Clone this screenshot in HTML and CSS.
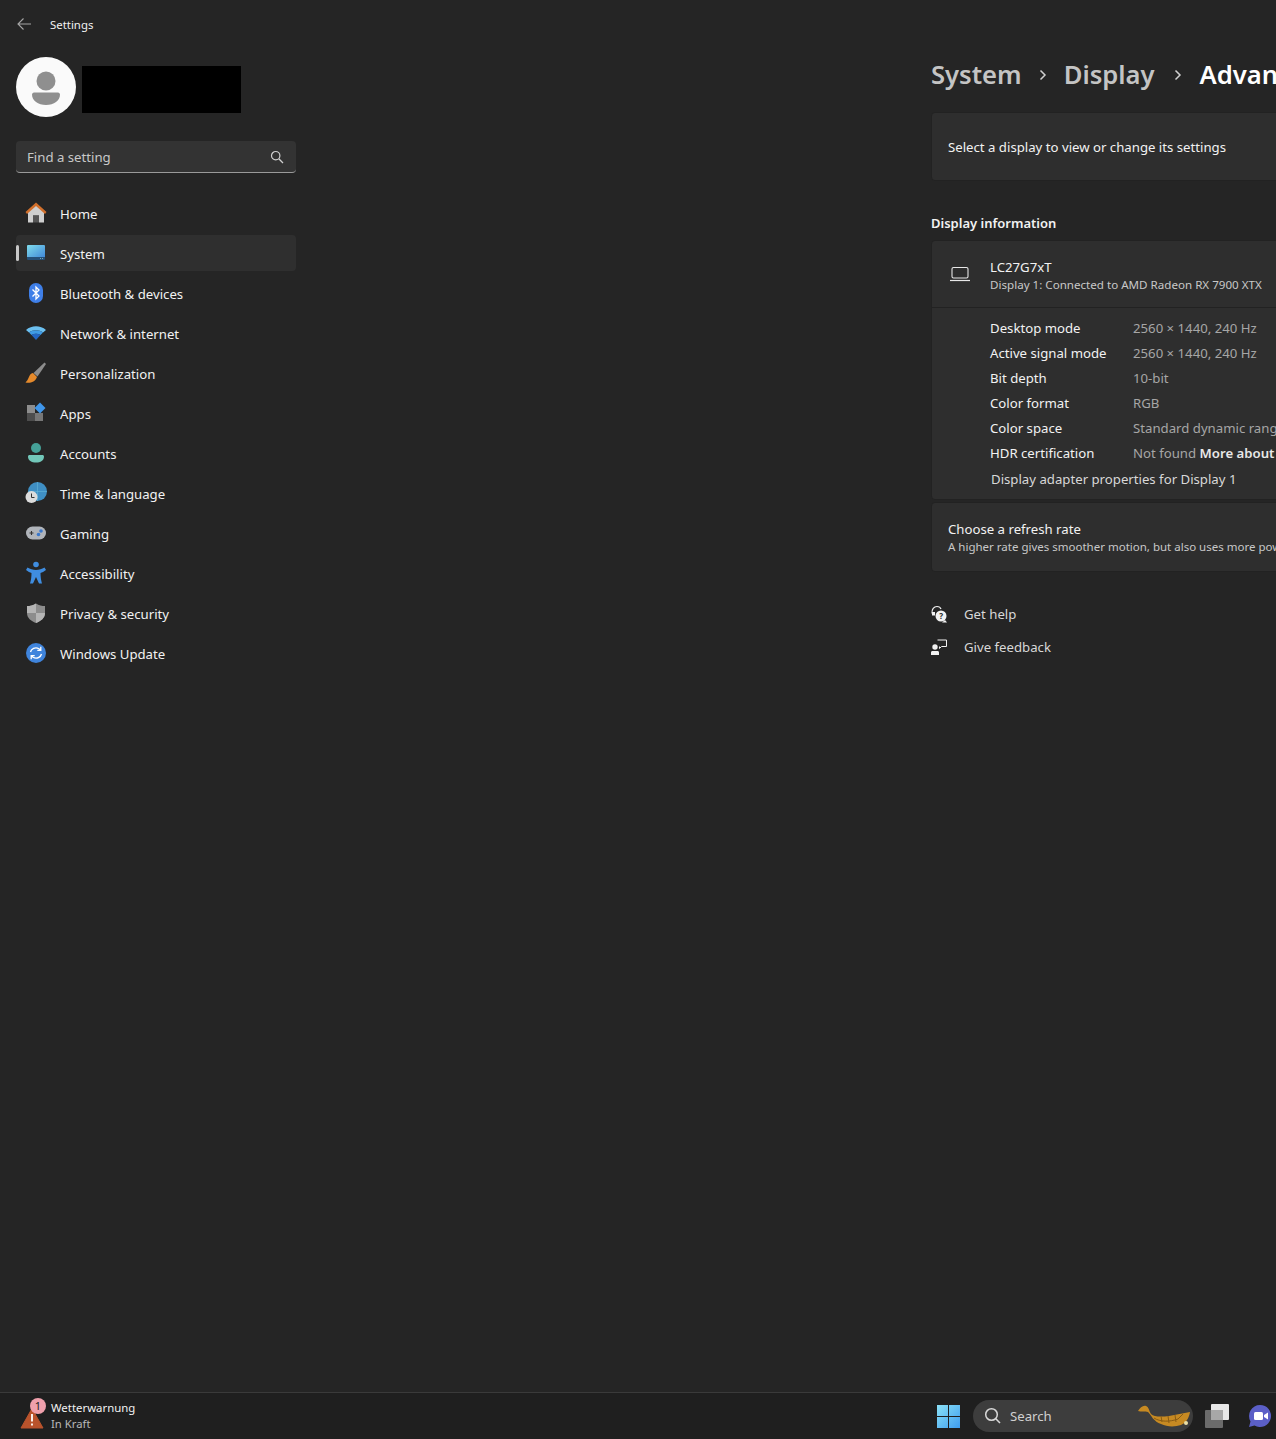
FILE: index.html
```html
<!DOCTYPE html>
<html lang="en">
<head>
    <meta charset="UTF-8">
    <meta name="viewport" content="width=device-width, initial-scale=1.0">
    <title>Settings</title>
    <link rel="stylesheet" href="styles.css">
</head>
<body>
    <div class="window">
        <header class="titlebar">
            <svg class="back-icon" width="16" height="16" viewBox="0 0 16 16"><path d="M15 8H2M7.500 2.500 2 8l5.500 5.500" fill="none" stroke="#a6a6a6" stroke-width="1.100"/></svg>
            <span class="app-title">Settings</span>
        </header>

        <div class="columns">
            <aside class="sidebar">
                <div class="profile">
                    <div class="avatar">
                        <svg width="60" height="60" viewBox="0 0 60 60"><circle cx="30" cy="24" r="9.500" fill="#8f8f8f"/><path d="M16 37.500c0-1 1-2 2-2h24c1 0 2 1 2 2 0 6-6 10.500-14 10.500s-14-4.500-14-10.500z" fill="#8f8f8f"/></svg>
                    </div>
                    <div class="redacted"></div>
                </div>

                <div class="search-box">
                    <span>Find a setting</span>
                    <svg width="14" height="14" viewBox="0 0 14 14"><circle cx="5.700" cy="5.700" r="4.200" fill="none" stroke="#d0d0d0" stroke-width="1.200"/><path d="M8.800 8.800 13 13" stroke="#d0d0d0" stroke-width="1.300"/></svg>
                </div>

                <nav class="nav">
                    <a class="nav-item">
                        <svg class="nav-icon" viewBox="0 0 24 24"><path d="M4 10 12 3.500l8 6.500v11.500H15v-7H9v7H4z" fill="#cfcfcf"/><path d="M9 14.500h6v7H9z" fill="#555"/><path d="M1.500 11 12 1.500 22.500 11 21 13 12 5 3 13z" fill="#d2702c"/></svg>
                        Home
                    </a>
                    <a class="nav-item active">
                        <svg class="nav-icon" viewBox="0 0 24 24"><defs><linearGradient id="sys" x1="0" y1="0" x2="1" y2="1"><stop offset="0" stop-color="#7fdcec"/><stop offset="1" stop-color="#3f86d8"/></linearGradient></defs><rect x="3" y="4" width="18" height="13" rx="1" fill="url(#sys)"/><path d="M3 16h18v2a1 1 0 0 1-1 1H4a1 1 0 0 1-1-1z" fill="#254f78"/><path d="M16 17.500h1M18 17.500h1" stroke="#9cc" stroke-width=".7"/></svg>
                        System
                    </a>
                    <a class="nav-item">
                        <svg class="nav-icon" viewBox="0 0 24 24"><rect x="5" y="2" width="14" height="20" rx="7" fill="#3f7fe8"/><path d="M8.500 8.500 15 15l-3 3V6l3 3-6.500 6.500" fill="none" stroke="#fff" stroke-width="1.300"/></svg>
                        Bluetooth &amp; devices
                    </a>
                    <a class="nav-item">
                        <svg class="nav-icon" viewBox="0 0 24 24"><path d="M2 9C7.500 4 16.500 4 22 9l-3 2.500c-4-3-10-3-14 0z" fill="#6cc0f0"/><path d="M5 11.500c4-3 10-3 14 0L16.500 14c-2.700-1.800-6.300-1.800-9 0z" fill="#3f9be6"/><path d="M7.500 14c2.700-1.800 6.300-1.800 9 0L12 19z" fill="#2467c4"/></svg>
                        Network &amp; internet
                    </a>
                    <a class="nav-item">
                        <svg class="nav-icon" viewBox="0 0 24 24"><path d="M20.500 1.500 22 3 13.500 15.500 9.500 12z" fill="#8c8c8c"/><path d="M9 12c-3 .5-3.500 3-4.500 5-.5 1.500-1.500 3-3 4.500 4.500.8 9.500 0 11.500-5.500z" fill="#e58a2c"/></svg>
                        Personalization
                    </a>
                    <a class="nav-item">
                        <svg class="nav-icon" viewBox="0 0 24 24"><rect x="3" y="4" width="8" height="8" fill="#8d8d8d"/><rect x="3" y="12" width="8" height="8" fill="#4d4d4d"/><rect x="11" y="12" width="8" height="8" fill="#777"/><path d="M16 1.500 21.500 7 16 12.500 10.500 7z" fill="#3f96ea"/></svg>
                        Apps
                    </a>
                    <a class="nav-item">
                        <svg class="nav-icon" viewBox="0 0 24 24"><circle cx="12" cy="7" r="5" fill="#45a198"/><path d="M4 15.500c0-1 .8-1.500 1.500-1.500h13c.7 0 1.500.5 1.500 1.500 0 4-3.500 6-8 6s-8-2-8-6z" fill="#72c7b9"/></svg>
                        Accounts
                    </a>
                    <a class="nav-item">
                        <svg class="nav-icon" viewBox="0 0 24 24"><circle cx="13.500" cy="10.500" r="9.500" fill="#3f8fc4"/><path d="M13.500 1v19M4 10.500h19" stroke="#5fb0d6" stroke-width=".7"/><circle cx="7.500" cy="16" r="6" fill="#dcdcdc"/><path d="M7.500 12.500V16.500H10.500" fill="none" stroke="#333" stroke-width="1"/></svg>
                        Time &amp; language
                    </a>
                    <a class="nav-item">
                        <svg class="nav-icon" viewBox="0 0 24 24"><rect x="2" y="5.500" width="20" height="13" rx="6.500" fill="#b0b4ba"/><path d="M5.500 12h4M7.500 10v4" stroke="#333" stroke-width="1.100"/><circle cx="17" cy="10" r="1.800" fill="#3a78cc"/><circle cx="14.500" cy="13.500" r="1.800" fill="#3a78cc"/></svg>
                        Gaming
                    </a>
                    <a class="nav-item">
                        <svg class="nav-icon" viewBox="0 0 24 24"><circle cx="12" cy="3.500" r="2.800" fill="#3f8de0"/><path d="M3.500 6.500c2.500 1.500 5.500 2.500 8.500 2.500s6-1 8.500-2.500L22 9c-2 1.500-4 2.500-5.500 3 0 4 .5 7 1.500 10.500h-3L12 16l-3 6.500H6c1-3.500 1.500-6.500 1.500-10.500C6 11.500 4 10.500 2 9z" fill="#3f8de0"/></svg>
                        Accessibility
                    </a>
                    <a class="nav-item">
                        <svg class="nav-icon" viewBox="0 0 24 24"><path d="M12 2.500c3 2 6 2.500 9 2.500v7c0 5-4 8-9 10-5-2-9-5-9-10V5c3 0 6-.5 9-2.500z" fill="#8d8d8d"/><path d="M12 2.500V12H3V5c3 0 6-.5 9-2.500zM12 12h9c0 5-4 8-9 10z" fill="#b5b5b5"/></svg>
                        Privacy &amp; security
                    </a>
                    <a class="nav-item">
                        <svg class="nav-icon" viewBox="0 0 24 24"><circle cx="12" cy="12" r="10" fill="#3f84dc"/><path d="M6.500 11c.6-3 4.800-5.500 8.500-3.200l1.500 1.400M16.800 5.800v3.600h-3.500M17.500 13c-.6 3-4.800 5.500-8.500 3.200l-1.500-1.400M7.200 18.200v-3.600h3.500" fill="none" stroke="#fff" stroke-width="1.300"/></svg>
                        Windows Update
                    </a>
                </nav>
            </aside>

            <main class="content">
                <div class="breadcrumb">
                    <span class="crumb">System</span>
                    <svg class="crumb-sep" width="12" height="12" viewBox="0 0 12 12"><path d="M3.500 1.500 8 6l-4.500 4.500" fill="none" stroke="#d0d0d0" stroke-width="1.500"/></svg>
                    <span class="crumb">Display</span>
                    <svg class="crumb-sep last-sep" width="12" height="12" viewBox="0 0 12 12"><path d="M3.500 1.500 8 6l-4.500 4.500" fill="none" stroke="#d0d0d0" stroke-width="1.500"/></svg>
                    <span class="crumb current">Advanced display</span>
                </div>

                <div class="card select-card">Select a display to view or change its settings</div>

                <h2 class="section-title">Display information</h2>

                <div class="card info-card">
                    <div class="info-header">
                        <svg class="laptop-icon" width="20" height="20" viewBox="0 0 20 20"><rect x="2" y="3.500" width="16" height="10.500" rx="1.500" fill="none" stroke="#e8e8e8" stroke-width="1.100"/><path d="M0 16.500h20" stroke="#e8e8e8" stroke-width="1.200"/></svg>
                        <div class="info-head-text">
                            <div class="info-name">LC27G7xT</div>
                            <div class="info-sub">Display 1: Connected to AMD Radeon RX 7900 XTX</div>
                        </div>
                    </div>
                    <div class="info-rows">
                        <div class="info-row"><span class="label">Desktop mode</span><span class="value">2560 × 1440, 240 Hz</span></div>
                        <div class="info-row"><span class="label">Active signal mode</span><span class="value">2560 × 1440, 240 Hz</span></div>
                        <div class="info-row"><span class="label">Bit depth</span><span class="value">10-bit</span></div>
                        <div class="info-row"><span class="label">Color format</span><span class="value">RGB</span></div>
                        <div class="info-row"><span class="label">Color space</span><span class="value">Standard dynamic range (SDR)</span></div>
                        <div class="info-row"><span class="label">HDR certification</span><span class="value">Not found <strong>More about HDR</strong></span></div>
                        <div class="adapter-link">Display adapter properties for Display 1</div>
                    </div>
                </div>

                <div class="card refresh-card">
                    <div class="refresh-title">Choose a refresh rate</div>
                    <div class="refresh-sub">A higher rate gives smoother motion, but also uses more power</div>
                </div>

                <div class="help-links">
                    <a class="help-link">
                        <svg width="16" height="18" viewBox="0 0 16 18"><path d="M1 8.500C.5 4 3 1.500 6 1.500c2 0 3.500 1 4 2.500" fill="none" stroke="#f2f2f2" stroke-width="1.200"/><path d="M1 7h3v3.500H1z" fill="#f2f2f2"/><circle cx="10" cy="11" r="5.500" fill="#f2f2f2"/><path d="M14 15l2 2.500h-5z" fill="#f2f2f2"/><text x="8.300" y="14" class="help-mark">?</text></svg>
                        Get help
                    </a>
                    <a class="help-link">
                        <svg width="16" height="16" viewBox="0 0 16 16"><path d="M6.500 1h9v6.500h-5L8.500 9.500v-2" fill="none" stroke="#f2f2f2" stroke-width="1"/><circle cx="4" cy="8" r="2.700" fill="#f2f2f2"/><path d="M0 16v-2.500c0-1 .7-1.500 1.500-1.500h5c.8 0 1.500.5 1.500 1.500V16z" fill="#f2f2f2"/></svg>
                        Give feedback
                    </a>
                </div>
            </main>
        </div>

        <footer class="taskbar">
            <div class="weather">
                <div class="weather-icon">
                    <svg width="24" height="22" viewBox="0 0 24 22"><path d="M12 1.500 23 21H1z" fill="#b9532c" stroke="#b9532c" stroke-linejoin="round"/><path d="M12 7v7.500M12 16.500v2" stroke="#fff" stroke-width="1.800"/></svg>
                    <span class="badge">1</span>
                </div>
                <div class="weather-text">
                    <div class="weather-title">Wetterwarnung</div>
                    <div class="weather-sub">In Kraft</div>
                </div>
            </div>

            <div class="tray">
                <svg width="24" height="24" viewBox="0 0 24 24"><defs><linearGradient id="win" x1="0" y1="0" x2="1" y2="1"><stop offset="0" stop-color="#8be2f7"/><stop offset="1" stop-color="#3e9cf0"/></linearGradient></defs><path d="M0 1h11v11H0zM12 1h11v11H12zM0 13h11v11H0zM12 13h11v11H12z" fill="url(#win)"/></svg>

                <div class="task-search">
                    <svg width="18" height="18" viewBox="0 0 18 18"><circle cx="7.500" cy="7.500" r="5.800" fill="none" stroke="#d8d8d8" stroke-width="1.500"/><path d="M11.800 11.800 16 16" stroke="#d8d8d8" stroke-width="1.600"/></svg>
                    <span>Search</span>
                    <svg class="search-art" width="54" height="26" viewBox="0 0 54 26"><path d="M1 8C3 5 6 2 9 3c3 1 3 5 5 8 3 3 10 3 18 2 7-1 14-3 21-4-1 6-4 11-9 13-6 2-14 2-20-1C17 19 14 12 11 9 8 8 4 9 1 8z" fill="#c78a22"/><path d="M17 15c6 4 16 4 24 1l5-5M24 13l1 6M31 13l1 7M38 12l1 7" fill="none" stroke="#8a5c14" stroke-width="1"/><circle cx="49" cy="20" r="2" fill="#eadfa8"/></svg>
                </div>

                <svg class="task-view" width="24" height="24" viewBox="0 0 24 24"><rect x="6" y="0" width="18" height="16" rx="1" fill="#e8e8e8"/><rect x="0" y="6" width="18" height="18" rx="1" fill="#6b6b6b"/><rect x="6" y="6" width="12" height="10" fill="#a8a8a8"/></svg>

                <svg class="meet" width="24" height="24" viewBox="0 0 24 24"><path d="M12 1a11 11 0 1 1-5.500 20.500L1 23l1.500-5.500A11 11 0 0 1 12 1z" fill="#5b5fc7"/><rect x="6" y="8" width="9" height="8" rx="1.500" fill="#fff"/><path d="M16 11l4-2.500v7L16 13z" fill="#fff"/></svg>
            </div>
        </footer>
    </div>
</body>
</html>
```

FILE: styles.css
```css
* {
    box-sizing: border-box;
}

html, body {
    margin: 0;
    padding: 0;
    height: 100%;
    overflow: hidden;
}

body {
    font-family: 'Noto Sans', 'Open Sans', sans-serif;
    font-size: 13.2px;
    background: #252525;
    color: #f2f2f2;
}

.window {
    display: flex;
    flex-direction: column;
    height: 100vh;
}

.titlebar {
    display: flex;
    align-items: center;
    height: 48px;
    padding-left: 16px;
    flex-shrink: 0;
}

.back-icon {
    margin-right: 18px;
}

.app-title {
    font-size: 11.4px;
}

.columns {
    display: flex;
    flex: 1;
    min-height: 0;
    justify-content: space-between;
}

.sidebar {
    width: 312px;
    padding: 9px 16px 0;
}

.profile {
    display: flex;
    align-items: center;
    gap: 6px;
    height: 60px;
}

.avatar {
    width: 60px;
    height: 60px;
    border-radius: 50%;
    background: #fafafa;
}

.avatar svg {
    display: block;
}

.redacted {
    width: 159px;
    height: 47px;
    margin-top: 5px;
    background: #000;
}

.search-box {
    display: flex;
    align-items: center;
    justify-content: space-between;
    height: 32px;
    margin-top: 24px;
    padding: 0 12px 0 11px;
    background: #333;
    border-radius: 4px;
    border-bottom: 1px solid #9a9a9a;
    color: #c8c8c8;
}

.nav {
    display: flex;
    flex-direction: column;
    gap: 4px;
    margin-top: 22px;
}

.nav-item {
    position: relative;
    display: flex;
    align-items: center;
    gap: 12px;
    height: 36px;
    padding: 2px 0 0 8px;
}

.nav-item.active {
    background: #2f2f2f;
    border-radius: 4px;
}

.nav-item.active::before {
    content: '';
    position: absolute;
    left: 0;
    top: 10px;
    width: 3px;
    height: 16px;
    background: #c8c8c8;
    border-radius: 2px;
}

.nav-icon {
    width: 24px;
    height: 24px;
    margin-top: -2px;
    flex-shrink: 0;
}

.content {
    width: 345px;
    overflow: hidden;
    flex-shrink: 0;
}

.breadcrumb {
    display: flex;
    align-items: center;
    width: 700px;
    height: 40px;
    margin-top: 6px;
    font-size: 25.6px;
    font-weight: 600;
    white-space: nowrap;
}

.crumb {
    color: #c4c4c4;
}

.crumb.current {
    color: #fff;
}

.crumb-sep {
    margin: 2px 15px 0;
}

.crumb-sep.last-sep {
    margin: 2px 16px 0 17px;
}

.card {
    width: 900px;
    background: #2e2e2e;
    border: 1px solid #222;
    border-radius: 4px;
}

.select-card {
    display: flex;
    align-items: center;
    height: 69px;
    margin-top: 18px;
    padding-left: 16px;
}

.section-title {
    margin: 33px 0 0;
    height: 26px;
    font-size: 13px;
    font-weight: 600;
    line-height: 19px;
}

.info-card {
    height: 260px;
}

.info-header {
    display: flex;
    align-items: center;
    height: 67px;
    padding-left: 18px;
    gap: 20px;
    border-bottom: 1px solid #222;
}

.info-head-text {
    padding-top: 2px;
}

.info-name {
    line-height: 18px;
}

.info-sub {
    font-size: 11.6px;
    line-height: 17px;
    color: #c8c8c8;
}

.info-rows {
    padding: 8px 0 0 58px;
}

.info-row {
    display: flex;
    height: 25px;
    line-height: 25px;
}

.label {
    width: 143px;
}

.value {
    color: #a6a6a6;
    white-space: nowrap;
}

.value strong {
    color: #e8e8e8;
    font-weight: 600;
}

.adapter-link {
    margin: 1px 0 0 1px;
    height: 25px;
    line-height: 25px;
    color: #d8d8d8;
}

.refresh-card {
    display: flex;
    flex-direction: column;
    justify-content: center;
    height: 70px;
    margin-top: 2px;
    padding-left: 16px;
}

.refresh-title {
    padding-top: 1px;
    line-height: 18px;
}

.refresh-sub {
    font-size: 11.5px;
    line-height: 17px;
    color: #c8c8c8;
    white-space: nowrap;
}

.help-links {
    display: flex;
    flex-direction: column;
    gap: 9px;
    margin-top: 30px;
}

.help-link {
    display: flex;
    align-items: center;
    gap: 17px;
    height: 24px;
    color: #d8d8d8;
}

.help-mark {
    font-size: 8px;
    font-weight: 700;
    fill: #252525;
}

.taskbar {
    display: flex;
    align-items: center;
    justify-content: space-between;
    height: 47px;
    flex-shrink: 0;
    background: #1f1f1f;
    border-top: 1px solid #3a3a3a;
}

.weather {
    display: flex;
    align-items: center;
    gap: 7px;
    padding-left: 20px;
}

.weather-icon {
    position: relative;
    width: 24px;
    height: 24px;
    margin-top: 6px;
}

.badge {
    position: absolute;
    top: -9px;
    left: 10px;
    width: 16px;
    height: 16px;
    border-radius: 50%;
    background: #f0a0ac;
    color: #222;
    font-size: 11px;
    line-height: 16px;
    text-align: center;
}

.weather-title {
    font-size: 11.4px;
    line-height: 16px;
}

.weather-sub {
    font-size: 11.3px;
    line-height: 16px;
    color: #b8b8b8;
}

.tray {
    display: flex;
    align-items: center;
    padding-right: 4px;
}

.task-search {
    display: flex;
    align-items: center;
    width: 220px;
    height: 32px;
    margin-left: 12px;
    padding-left: 11px;
    gap: 8px;
    background: #3d3d3d;
    border-radius: 16px;
    color: #d0d0d0;
}

.search-art {
    margin-left: auto;
    margin-right: 2px;
}

.task-view {
    margin-left: 12px;
}

.meet {
    margin-left: 19px;
}
```
